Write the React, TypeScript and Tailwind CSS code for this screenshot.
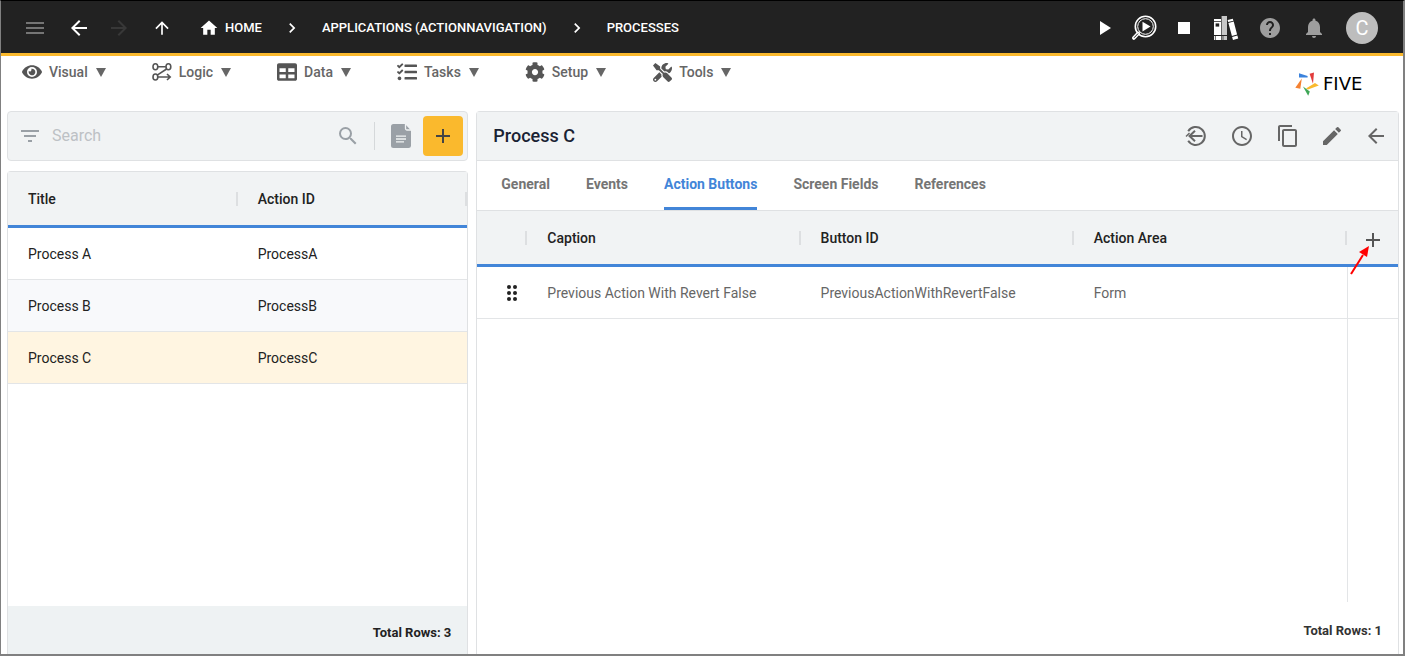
import type { ReactNode } from "react";
import { FaEye, FaTable, FaTasks, FaCog, FaTools } from "react-icons/fa";
import {
  MdAccessTime,
  MdAdd,
  MdArrowBack,
  MdArrowForward,
  MdArrowUpward,
  MdChevronRight,
  MdContentCopy,
  MdEdit,
  MdFilterList,
  MdHelp,
  MdHome,
  MdMenu,
  MdNotifications,
  MdPlayArrow,
  MdSearch,
  MdStop,
} from "react-icons/md";

type ProcessRow = { title: string; actionId: string };

const processes: ProcessRow[] = [
  { title: "Process A", actionId: "ProcessA" },
  { title: "Process B", actionId: "ProcessB" },
  { title: "Process C", actionId: "ProcessC" },
];

const tabs = ["General", "Events", "Action Buttons", "Screen Fields", "References"];

const LogicIcon = () => (
  <svg width="20" height="18" viewBox="0 0 20 18" fill="none" stroke="currentColor" strokeWidth="1.6">
    <ellipse cx="3.4" cy="3.8" rx="2.4" ry="3" />
    <ellipse cx="16.4" cy="3.8" rx="2.4" ry="3" />
    <ellipse cx="3.4" cy="14" rx="2.4" ry="3" />
    <path d="M5.8 3.8h8M14.600 6 5.200 12.200M6 14h12M15 11l3.200 3-3.200 3" />
  </svg>
);

const DebugIcon = () => (
  <svg width="26" height="26" viewBox="0 0 26 26" fill="none" stroke="currentColor">
    <circle cx="14.5" cy="11.5" r="10.2" strokeWidth="1.6" />
    <circle cx="14.5" cy="11.5" r="7.8" strokeWidth="1" />
    <path d="M7.3 18.3 2.8 23" strokeWidth="3.6" strokeLinecap="round" />
    <path d="M7 18.6 3 22.8" stroke="#222" strokeWidth="1" />
    <path d="M11.5 6.8v9.6l8-4.8z" fill="currentColor" stroke="none" />
  </svg>
);

const BooksIcon = () => (
  <svg width="26" height="26" viewBox="0 0 26 26" fill="currentColor">
    <path d="M1 4h7v2.2H1zM1 7h7v13H1zM1 21h7v4H1z" />
    <path d="M8.6 1H14v19H8.6zM8.6 21H14v4H8.6z" opacity=".75" />
    <path d="m14.6 5 5.2-1.3.6 2-5.2 1.4zM15.4 8l5.3-1.4 3.4 13-5.2 1.4zM19.1 22l5.3-1.4.8 3-5.2 1.4z" />
    <path d="M2.6 8.4h3.6v3.2H2.6z" fill="#222" />
    <path d="M2.4 21v4M10 21v4" stroke="#222" strokeWidth=".7" />
  </svg>
);

const NoteIcon = () => (
  <svg width="20" height="24" viewBox="0 0 20 24" fill="none">
    <path d="M2.5 0H14l6 6.5v14.8A2.5 2.5 0 0 1 17.5 24h-15A2.5 2.5 0 0 1 0 21.5v-19A2.5 2.5 0 0 1 2.5 0z" fill="#9aa0a6" />
    <path d="M14.5 0v4.500A1.5 1.5 0 0 0 16 6h4" stroke="#f1f3f4" strokeWidth="1.3" />
    <path d="M5 12.200h10M5 15h10M5 17.800h8" stroke="#f1f3f4" strokeWidth="1.3" />
  </svg>
);

const RevertIcon = () => (
  <svg width="22" height="22" viewBox="0 0 22 22" fill="none" stroke="currentColor" strokeWidth="2">
    <path d="M3.2 6.2A9 9 0 1 1 3.2 15.8" />
    <path d="M17.5 11h-13M10 5.800 4.500 11l5.500 5.200" />
    <path d="M1 11.500 4.500 8" strokeWidth="1.5" />
  </svg>
);

const FiveMark = () => (
  <svg width="24" height="24" viewBox="0 0 24 24">
    <path d="M4 1.200 12.600 4v1.600L4 5.400z" fill="#3b82dc" />
    <path d="M14.600 1.800 19 .4l-1 11.400z" fill="#e23c3c" />
    <path d="M23.800 13.400 20 11l-9 5.500 2 1z" fill="#fab92d" />
    <path d="m8 14.500 6.800 5-1.600 4.300z" fill="#3fa757" />
    <path d="M6.800 6.500.3 15.800l5 1z" fill="#f58232" />
  </svg>
);

const DragIcon = () => (
  <svg width="12" height="18" viewBox="0 0 12 18" fill="#222">
    {[3, 9, 15].map((y) => (
      <g key={y}>
        <circle cx="3" cy={y} r="2" />
        <circle cx="9" cy={y} r="2" />
      </g>
    ))}
  </svg>
);

const menus: { label: string; icon: ReactNode }[] = [
  { label: "Visual", icon: <FaEye size={20} /> },
  { label: "Logic", icon: <LogicIcon /> },
  { label: "Data", icon: <FaTable size={20} /> },
  { label: "Tasks", icon: <FaTasks size={20} /> },
  { label: "Setup", icon: <FaCog size={20} /> },
  { label: "Tools", icon: <FaTools size={19} /> },
];

const IconButton = ({
  label,
  className = "",
  children,
}: {
  label: string;
  className?: string;
  children: ReactNode;
}) => (
  <button type="button" aria-label={label} className={`flex h-11 shrink-0 items-center justify-center ${className}`}>
    {children}
  </button>
);

const HeadCell = ({ children }: { children?: ReactNode }) => (
  <th className="border-b-3 border-[#4285d8] p-0 text-left font-medium">
    <div className="flex items-center justify-between pl-5">
      <span>{children}</span>
      <span className="h-3.5 w-0.5 bg-[#dddfe1]" />
    </div>
  </th>
);

const TopBar = () => (
  <header className="flex h-[55px] items-center justify-between border-b-3 border-[#fab92d] bg-[#222] pt-0.5 pr-[25px] pl-3 text-[13px] font-medium text-white">
    <nav className="flex items-center">
      <IconButton label="Menu" className="w-11 text-[#757575]"><MdMenu size={24} /></IconButton>
      <IconButton label="Back" className="w-11"><MdArrowBack size={24} /></IconButton>
      <IconButton label="Forward" className="w-9 text-[#383838]"><MdArrowForward size={24} /></IconButton>
      <IconButton label="Up" className="w-[50px]"><MdArrowUpward size={20} /></IconButton>
      <a href="#home" className="ml-3 flex items-center gap-1.5">
        <MdHome size={20} />
        HOME
      </a>
      <MdChevronRight size={20} className="mx-5" />
      <a href="#applications">APPLICATIONS (ACTIONNAVIGATION)</a>
      <MdChevronRight size={20} className="mx-5" />
      <a href="#processes">PROCESSES</a>
    </nav>
    <div className="flex items-center">
      <IconButton label="Run" className="w-10"><MdPlayArrow size={24} /></IconButton>
      <IconButton label="Debug" className="w-10"><DebugIcon /></IconButton>
      <IconButton label="Stop" className="w-10"><MdStop size={24} /></IconButton>
      <IconButton label="Library" className="w-11"><BooksIcon /></IconButton>
      <IconButton label="Help" className="w-11 text-[#9e9e9e]"><MdHelp size={24} /></IconButton>
      <IconButton label="Notifications" className="w-11 text-[#9e9e9e]"><MdNotifications size={24} /></IconButton>
      <button type="button" className="ml-2.5 size-8 rounded-full bg-[#bdbdbd] text-xl font-normal">C</button>
    </div>
  </header>
);

const MenuBar = () => (
  <div className="flex h-[55px] items-start justify-between pr-5 pl-[21px]">
    <nav className="flex gap-[46px] pt-1 text-sm font-medium text-[#666]">
      {menus.map((menu) => (
        <button key={menu.label} type="button" className="flex items-center">
          <span className="flex h-6 w-5 items-center justify-center text-[#555]">{menu.icon}</span>
          <span className="ml-[7px]">{menu.label}</span>
          <svg width="10" height="9" viewBox="0 0 10 9" fill="currentColor" className="ml-2">
            <path d="M0 0h10L5 9z" />
          </svg>
        </button>
      ))}
    </nav>
    <div className="flex items-center gap-1 pt-4 font-['DejaVu_Sans',sans-serif] text-lg leading-6 text-black">
      <FiveMark />
      <span className="min-w-15">FIVE</span>
    </div>
  </div>
);

const ProcessList = () => (
  <section className="flex min-w-0 flex-col">
    <div className="flex h-[50px] items-center rounded border border-[#dfe1e3] bg-[#f1f3f4] pr-1 pl-2.5 text-[#9aa0a6]">
      <MdFilterList size={24} />
      <input
        type="search"
        aria-label="Search"
        placeholder="Search"
        className="ml-2.5 min-w-0 flex-1 bg-transparent text-base outline-none placeholder:text-[#bdc1c5]"
      />
      <IconButton label="Search" className="w-10"><MdSearch size={24} /></IconButton>
      <span className="ml-1.5 h-7 w-px bg-[#d5d8da]" />
      <IconButton label="Notes" className="ml-1 w-11"><NoteIcon /></IconButton>
      <button
        type="button"
        aria-label="Add process"
        className="flex size-10 items-center justify-center rounded bg-[#fab92d] text-[#444]"
      >
        <MdAdd size={24} />
      </button>
    </div>

    <div className="mt-2.5 flex flex-1 flex-col rounded-t border border-b-0 border-[#dfe1e3]">
      <table className="w-full table-fixed border-separate border-spacing-0 text-sm text-[#222]">
        <thead>
          <tr className="h-14 bg-[#f1f3f4]">
            <HeadCell>Title</HeadCell>
            <HeadCell>Action ID</HeadCell>
          </tr>
        </thead>
        <tbody>
          {processes.map((row) => (
            <tr key={row.actionId} className="h-13 even:bg-[#f8f9fb] last:bg-[#fff5e1]">
              <td className="border-b border-[#e3e5e7] px-5">{row.title}</td>
              <td className="border-b border-[#e3e5e7] px-5">{row.actionId}</td>
            </tr>
          ))}
        </tbody>
      </table>
      <div className="mt-auto flex h-12 items-center justify-end bg-[#eef2f3] px-4 pt-1.5 text-[13px] font-bold text-[#222]">
        Total Rows: 3
      </div>
    </div>
  </section>
);

const ProcessForm = () => (
  <section className="flex min-w-0 flex-col rounded-t border border-b-0 border-[#dfe1e3]">
    <div className="flex h-[49px] items-center justify-between border-b border-[#dfe1e3] bg-[#f1f3f4] pl-4 text-[#666]">
      <h1 className="text-lg font-medium text-[#1a2233]">Process C</h1>
      <div className="flex items-center">
        <IconButton label="Revert" className="w-11"><RevertIcon /></IconButton>
        <IconButton label="History" className="w-12"><MdAccessTime size={24} /></IconButton>
        <IconButton label="Copy" className="w-11"><MdContentCopy size={24} /></IconButton>
        <IconButton label="Edit" className="w-11"><MdEdit size={24} /></IconButton>
        <IconButton label="Close" className="w-11"><MdArrowBack size={24} /></IconButton>
      </div>
    </div>

    <div role="tablist" className="flex h-[50px] gap-9 border-b border-[#dfe1e3] px-6 text-sm font-bold text-[#757575]">
      {tabs.map((tab) => (
        <button
          key={tab}
          type="button"
          role="tab"
          aria-selected={tab === "Action Buttons"}
          className="border-b-3 border-transparent aria-selected:border-[#4285d8] aria-selected:text-[#4285d8]"
        >
          {tab}
        </button>
      ))}
    </div>

    <table className="w-full table-fixed border-separate border-spacing-0 text-sm text-[#666]">
      <colgroup>
        <col className="w-[50px]" />
        <col />
        <col />
        <col />
        <col className="w-[51px]" />
      </colgroup>
      <thead>
        <tr className="h-14 bg-[#f1f3f4] text-[#222]">
          <HeadCell />
          <HeadCell>Caption</HeadCell>
          <HeadCell>Button ID</HeadCell>
          <HeadCell>Action Area</HeadCell>
          <th className="border-b-3 border-[#4285d8] p-0">
            <div className="relative flex justify-center pt-1 text-[#555]">
              <IconButton label="Add action button" className="w-11"><MdAdd size={24} /></IconButton>
              {/* pointer to the add button */}
              <svg width="22" height="32" viewBox="0 0 22 32" className="absolute top-8 left-0.5">
                <path d="M2 28 14 9" stroke="#f00" strokeWidth="2" />
                <path d="m20 0-2 11-8-5z" fill="#f00" />
              </svg>
            </div>
          </th>
        </tr>
      </thead>
      <tbody>
        <tr className="h-13">
          <td className="border-b border-[#e3e5e7] pl-[29px]"><DragIcon /></td>
          <td className="border-b border-[#e3e5e7] px-5">Previous Action With Revert False</td>
          <td className="border-b border-[#e3e5e7] px-5">PreviousActionWithRevertFalse</td>
          <td className="border-b border-[#e3e5e7] px-5">Form</td>
          <td className="border-b border-l border-[#e3e5e7]" />
        </tr>
      </tbody>
    </table>
    <div className="w-[51px] flex-1 self-end border-l border-[#e3e5e7]" />
    <div className="flex h-13 items-center justify-end px-4 pt-1.5 text-[13px] font-bold text-[#333]">
      Total Rows: 1
    </div>
  </section>
);

const App = () => (
  <div className="flex min-h-screen flex-col border-t border-r-2 border-b-2 border-l border-t-black border-r-[#808080] border-b-[#808080] border-l-[#808080] bg-white font-['Roboto',sans-serif]">
    <TopBar />
    <MenuBar />
    <main className="grid flex-1 grid-cols-[1fr_2fr] gap-2 pr-1 pl-1.5">
      <ProcessList />
      <ProcessForm />
    </main>
  </div>
);

export default App;
